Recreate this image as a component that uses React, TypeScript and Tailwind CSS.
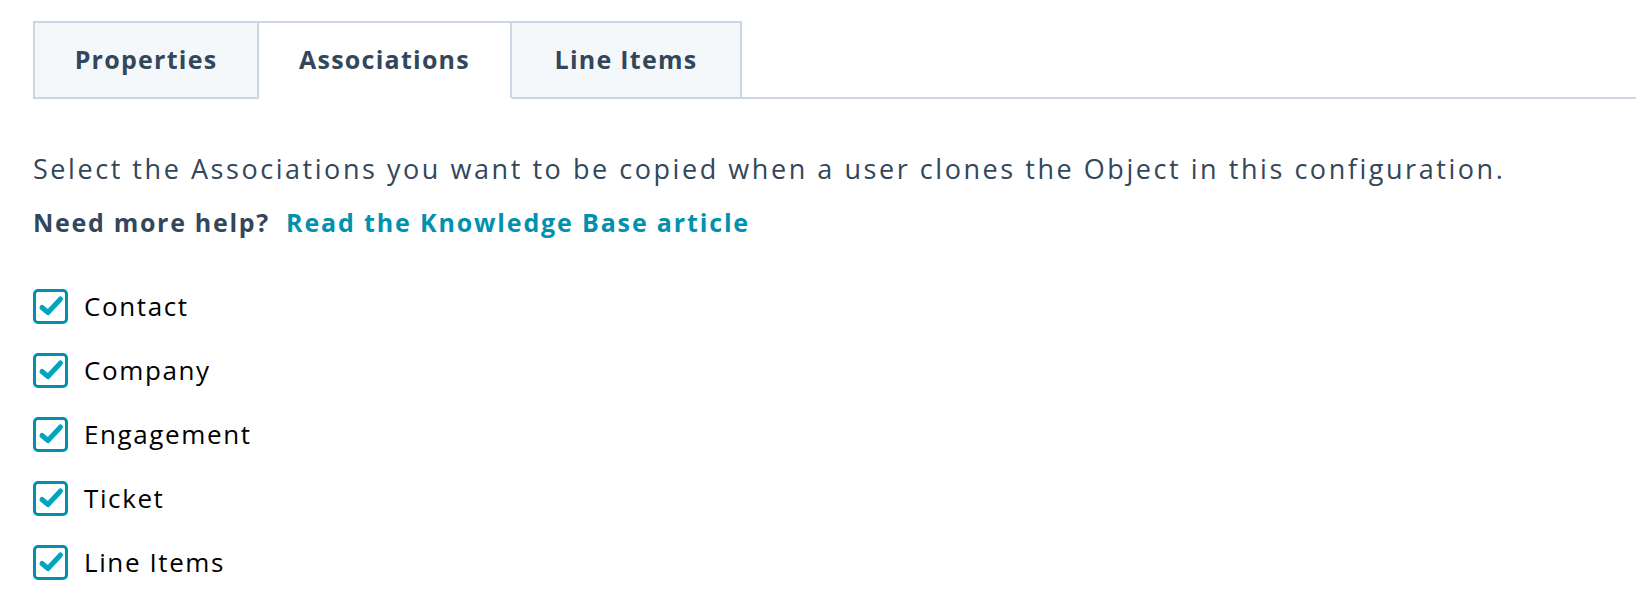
import { useState } from "react";

const tabs = ["Properties", "Associations", "Line Items"];
const items = ["Contact", "Company", "Engagement", "Ticket", "Line Items"];

const CheckBox = ({ checked }: { checked: boolean }) => (
  <span className="w-[35px] h-[35px] shrink-0 rounded-[5px] border-[3px] border-[#0091ae] bg-white flex items-center justify-center">
    {checked && (
      <svg width="29" height="29" viewBox="0 0 29 29" fill="none">
        <path d="M6 15.5 L12 20.5 L24.5 7" stroke="#00a4bd" strokeWidth="5" strokeLinecap="round" strokeLinejoin="round" />
      </svg>
    )}
  </span>
);

const App = () => {
  const [active, setActive] = useState(1);
  const [checked, setChecked] = useState<boolean[]>(items.map(() => true));

  const widths = ["w-[226px] border-l-2", "w-[253px]", "w-[230px]"];

  return (
    <div className="min-h-screen bg-white pt-[21px] font-['Open_Sans',sans-serif] text-[#33475b]">
      {/* Tabs */}
      <div className="flex pl-[33px]">
        {tabs.map((t, i) => (
          <button
            key={t}
            onClick={() => setActive(i)}
            className={`${widths[i]} h-[78px] border-t-2 border-r-2 border-[#cbd6e2] flex items-center justify-center text-[25px] tracking-[1.25px] font-bold ${
              active === i ? "bg-white border-b-2 border-b-white" : "bg-[#f5f8fa] border-b-2"
            }`}
          >
            {t}
          </button>
        ))}
        <div className="flex-1 border-b-2 border-[#cbd6e2]" />
      </div>

      {/* Body */}
      <div className="pl-[33px] pt-[52px]">
        <p className="text-[27px] leading-[36px] tracking-[2.55px]">
          Select the Associations you want to be copied when a user clones the Object in this configuration.
        </p>
        <p className="mt-[18px] text-[25px] leading-[34px] tracking-[1.7px] font-bold">
          Need more help?{" "}
          <a href="#" className="ml-[8px] tracking-[1.85px] text-[#0091ae]">Read the Knowledge Base article</a>
        </p>

        <div className="mt-[50px] flex flex-col gap-[29px]">
          {items.map((it, i) => (
            <label
              key={it}
              className="flex items-center gap-[16px] cursor-pointer"
              onClick={() => setChecked(c => c.map((v, j) => (j === i ? !v : v)))}
            >
              <CheckBox checked={checked[i]} />
              <span className="text-[26px] leading-[35px] tracking-[1.6px] text-black">{it}</span>
            </label>
          ))}
        </div>
      </div>
    </div>
  );
};

export default App;
